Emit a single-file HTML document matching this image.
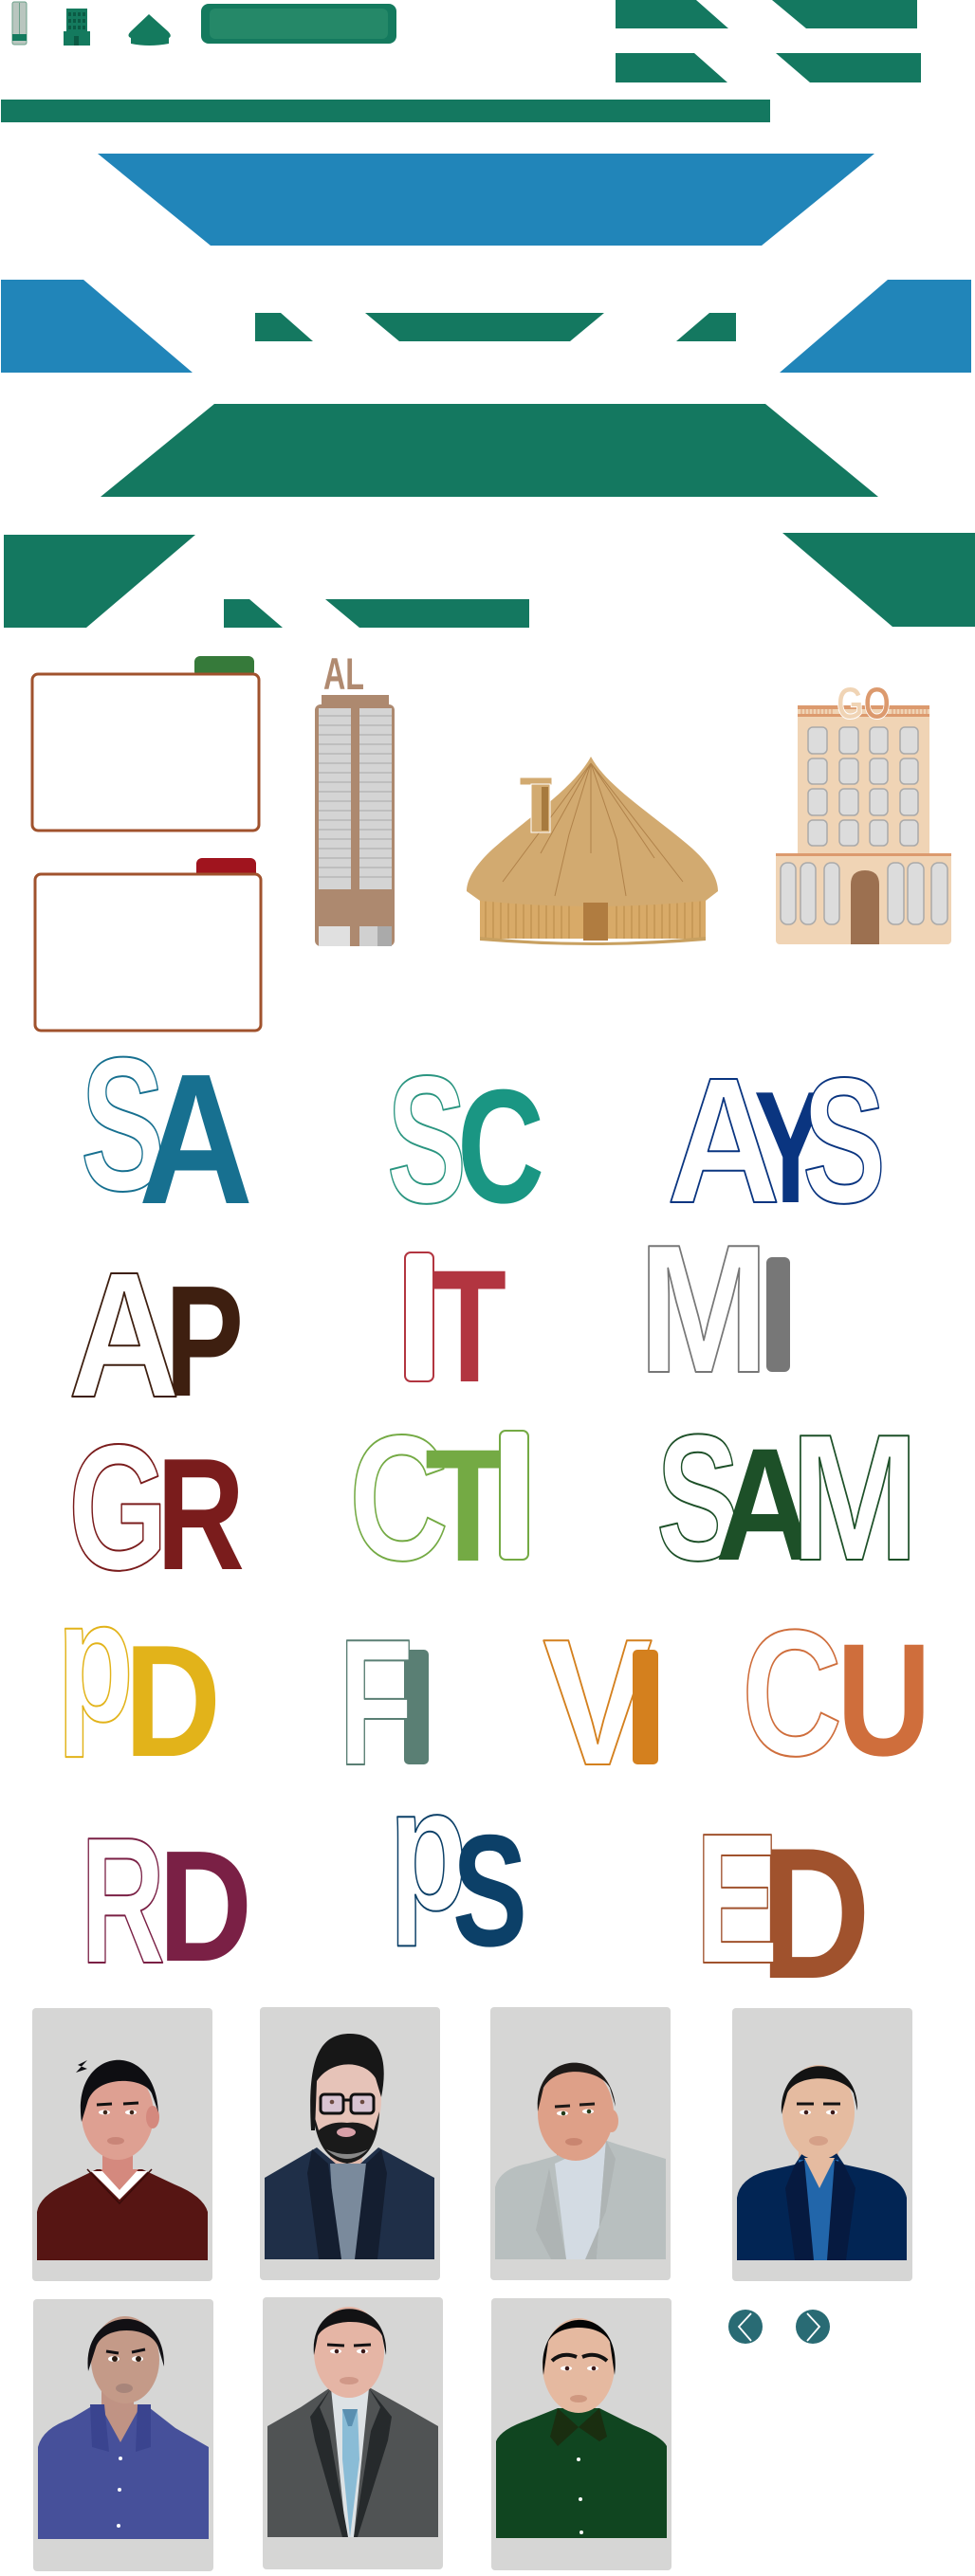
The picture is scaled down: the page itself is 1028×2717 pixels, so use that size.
<!DOCTYPE html>
<html><head><meta charset="utf-8"><style>
html,body{margin:0;padding:0;background:#fff;width:1028px;height:2717px;overflow:hidden}
svg{display:block}
.o{fill:#fff;stroke-width:2;stroke-linejoin:round}
text{font-family:"Liberation Sans Narrow","Liberation Sans",sans-serif;font-weight:bold}
</style></head><body>
<svg width="1028" height="2717" viewBox="0 0 1028 2717" xmlns="http://www.w3.org/2000/svg">
<!-- top icons -->
<rect x="13" y="2" width="15" height="45" rx="2" fill="#b9c6bf" stroke="#6aa08a"/>
<rect x="20" y="3" width="1" height="34" fill="#6aa08a"/>
<rect x="13" y="36" width="15" height="7" fill="#147a5e"/>
<rect x="70" y="9" width="22" height="25" fill="#147a5e"/>
<rect x="67" y="33" width="28" height="15" fill="#147a5e"/>
<g fill="#0b5a44"><rect x="72" y="13" width="3" height="4"/><rect x="77" y="13" width="3" height="4"/><rect x="82" y="13" width="3" height="4"/><rect x="87" y="13" width="3" height="4"/><rect x="72" y="20" width="3" height="4"/><rect x="77" y="20" width="3" height="4"/><rect x="82" y="20" width="3" height="4"/><rect x="87" y="20" width="3" height="4"/><rect x="72" y="27" width="3" height="4"/><rect x="77" y="27" width="3" height="4"/><rect x="82" y="27" width="3" height="4"/><rect x="87" y="27" width="3" height="4"/><rect x="78" y="38" width="5" height="10"/></g>
<path d="M157,15 L177,33 Q182,38 178,40 L178,46 Q157,50 138,46 L138,40 Q133,38 138,33 Z" fill="#147a5e"/>
<rect x="212" y="4" width="206" height="42" rx="8" fill="#147a5e"/>
<rect x="221" y="9" width="188" height="32" rx="6" fill="#258868"/>
<g fill="#147860">
<polygon points="649,0 734,0 768,30 649,30"/>
<polygon points="814,0 967,0 967,30 850,30"/>
<polygon points="649,56 732,56 767,87 649,87"/>
<polygon points="818,56 971,56 971,87 854,87"/>
<rect x="1" y="105" width="811" height="24"/>
<polygon points="269,330 296,330 330,360 269,360"/>
<polygon points="385,330 637,330 601,360 421,360"/>
<polygon points="748,330 776,330 776,360 713,360"/>
<polygon points="226,426 807,426 926,524 106,524"/>
<polygon points="4,564 206,564 91,662 4,662"/>
<polygon points="825,562 1028,562 1028,661 941,661"/>
<polygon points="236,632 263,632 298,662 236,662"/>
<polygon points="343,632 558,632 558,662 379,662"/>
</g>
<g fill="#2185b9">
<polygon points="103,162 922,162 803,259 222,259"/>
<polygon points="1,295 88,295 203,393 1,393"/>
<polygon points="936,295 1024,295 1024,393 822,393"/>
</g>
<!-- boxes -->
<rect x="205" y="692" width="63" height="22" rx="6" fill="#367a3a"/>
<rect x="34" y="711" width="239" height="165" rx="6" fill="#fff" stroke="#a0522d" stroke-width="3"/>
<rect x="207" y="905" width="63" height="22" rx="6" fill="#a0141e"/>
<rect x="37" y="922" width="238" height="165" rx="6" fill="#fff" stroke="#a0522d" stroke-width="3"/>
<!-- tower -->
<text x="341" y="727" font-size="47" textLength="43" lengthAdjust="spacingAndGlyphs" fill="#b08a70">AL</text>
<rect x="339" y="733" width="71" height="12" fill="#ad896f"/>
<rect x="332" y="743" width="84" height="255" rx="6" fill="#ad896f"/>
<rect x="336" y="747" width="34" height="191" fill="#d4d4d4"/>
<rect x="379" y="747" width="34" height="191" fill="#d4d4d4"/>
<g stroke="#a8a8a8" stroke-width="1">
<path d="M336,755H370M336,765H370M336,775H370M336,785H370M336,795H370M336,805H370M336,815H370M336,825H370M336,835H370M336,845H370M336,855H370M336,865H370M336,875H370M336,885H370M336,895H370M336,905H370M336,915H370M336,925H370M379,755H413M379,765H413M379,775H413M379,785H413M379,795H413M379,805H413M379,815H413M379,825H413M379,835H413M379,845H413M379,855H413M379,865H413M379,875H413M379,885H413M379,895H413M379,905H413M379,915H413M379,925H413"/>
</g>
<rect x="336" y="977" width="33" height="21" fill="#e0e0e0"/><rect x="379" y="977" width="34" height="21" fill="#d0d0d0"/><rect x="398" y="977" width="15" height="21" fill="#aaa"/>
<!-- hut -->
<rect x="506" y="945" width="238" height="45" fill="#d8aa68"/>
<g stroke="#b88a48" stroke-width="1"><path d="M512,948V990M520,948V990M528,948V990M536,948V990M544,948V990M552,948V990M560,948V990M568,948V990M576,948V990M584,948V990M592,948V990M600,948V990M650,948V990M658,948V990M666,948V990M674,948V990M682,948V990M690,948V990M698,948V990M706,948V990M714,948V990M722,948V990M730,948V990M738,948V990"/></g>
<path d="M506,988 Q625,1000 744,988 L744,992 Q625,1002 506,992Z" fill="#c8a060"/>
<path d="M623,798 C640,830 690,860 730,895 C752,915 757,930 757,940 L744,950 Q625,962 506,950 L492,940 C492,930 498,915 520,895 C560,860 606,830 623,798Z" fill="#d2aa70"/>
<g stroke="#b0824a" stroke-width="1" fill="none"><path d="M623,805 L600,880 M623,805 L650,885 M623,805 L570,900 M623,805 L690,905 M623,805 L530,930 M623,805 L720,930 M623,805 L623,900 M600,880 L585,945 M650,885 L660,945"/></g>
<rect x="615" y="952" width="26" height="40" fill="#b07c40"/>
<rect x="548" y="820" width="34" height="8" fill="#d2aa70" stroke="#fff"/>
<rect x="560" y="827" width="20" height="51" fill="#d2aa70" stroke="#fff"/>
<rect x="571" y="830" width="7" height="46" fill="#a77a3e"/>
<!-- GO building -->
<rect x="841" y="744" width="139" height="160" fill="#f0d4b5"/>
<rect x="841" y="744" width="139" height="4" fill="#dc9a6e"/><rect x="841" y="753" width="139" height="3" fill="#dc9a6e"/>
<g stroke="#dc9a6e" stroke-width="1"><path d="M845,748V753M849,748V753M853,748V753M857,748V753M861,748V753M865,748V753M869,748V753M873,748V753M877,748V753M941,748V753M945,748V753M949,748V753M953,748V753M957,748V753M961,748V753M965,748V753M969,748V753M973,748V753M977,748V753"/></g>
<text x="882" y="758" font-size="48" textLength="57" lengthAdjust="spacingAndGlyphs" fill="#f0d4b5" stroke="#fff" stroke-width="1">G<tspan fill="#dc9a6e">O</tspan></text>
<g fill="#dcdcdc" stroke="#aaa" stroke-width="1.5">
<rect x="852" y="767" width="20" height="28" rx="5"/><rect x="885" y="767" width="20" height="28" rx="5"/><rect x="917" y="767" width="19" height="28" rx="5"/><rect x="949" y="767" width="19" height="28" rx="5"/>
<rect x="852" y="800" width="20" height="27" rx="5"/><rect x="885" y="800" width="20" height="27" rx="5"/><rect x="917" y="800" width="19" height="27" rx="5"/><rect x="949" y="800" width="19" height="27" rx="5"/>
<rect x="852" y="832" width="20" height="28" rx="5"/><rect x="885" y="832" width="20" height="28" rx="5"/><rect x="917" y="832" width="19" height="28" rx="5"/><rect x="949" y="832" width="19" height="28" rx="5"/>
<rect x="852" y="865" width="20" height="27" rx="5"/><rect x="885" y="865" width="20" height="27" rx="5"/><rect x="917" y="865" width="19" height="27" rx="5"/><rect x="949" y="865" width="19" height="27" rx="5"/>
</g>
<rect x="818" y="900" width="185" height="96" rx="4" fill="#f0d4b5"/>
<rect x="818" y="900" width="185" height="3" fill="#dc9a6e"/>
<g fill="#dcdcdc" stroke="#aaa" stroke-width="1.5">
<rect x="823" y="910" width="16" height="65" rx="7"/><rect x="844" y="910" width="16" height="65" rx="7"/><rect x="869" y="910" width="16" height="65" rx="7"/><rect x="936" y="910" width="17" height="65" rx="7"/><rect x="957" y="910" width="17" height="65" rx="7"/><rect x="982" y="910" width="17" height="65" rx="7"/>
</g>
<path d="M897,996 V933 Q897,918 912,918 Q927,918 927,933 V996Z" fill="#9c7050"/>
<!-- letters -->
<g stroke="#177090" fill="#177090"><text class="o" x="85" y="1255" font-size="201" textLength="89" lengthAdjust="spacingAndGlyphs">S</text><text x="146" y="1269" font-size="196" textLength="121" lengthAdjust="spacingAndGlyphs" stroke="none">A</text></g>
<g stroke="#2a9580" fill="#1a9683"><text class="o" x="408" y="1268" font-size="192" textLength="84" lengthAdjust="spacingAndGlyphs">S</text><text x="482" y="1268" font-size="171" textLength="92" lengthAdjust="spacingAndGlyphs" stroke="none">C</text></g>
<g stroke="#0a3580" fill="#0a3580"><text class="o" x="703" y="1268" font-size="189" textLength="120" lengthAdjust="spacingAndGlyphs">A</text><text x="795" y="1268" font-size="168" textLength="77" lengthAdjust="spacingAndGlyphs" stroke="none">Y</text><text class="o" x="846" y="1268" font-size="189" textLength="88" lengthAdjust="spacingAndGlyphs">S</text></g>
<g stroke="#3e1f10" fill="#3e1f10"><text x="174" y="1472" font-size="167" textLength="83" lengthAdjust="spacingAndGlyphs" stroke="none">P</text><text class="o" x="72" y="1473" font-size="189" textLength="118" lengthAdjust="spacingAndGlyphs">A</text></g>
<g stroke="#b23540" fill="#b23540"><text x="456" y="1457" font-size="169" textLength="78" lengthAdjust="spacingAndGlyphs" stroke="none">T</text><rect class="o" x="427" y="1321" width="30" height="136" rx="6"/></g>
<g stroke="#777" fill="#777"><rect x="808" y="1326" width="25" height="121" rx="6" stroke="none"/><text class="o" x="673" y="1447" font-size="193" textLength="138" lengthAdjust="spacingAndGlyphs">M</text></g>
<g stroke="#7a1c1c" fill="#7a1c1c"><text class="o" x="72" y="1655" font-size="189" textLength="105" lengthAdjust="spacingAndGlyphs">G</text><text x="165" y="1655" font-size="168" textLength="93" lengthAdjust="spacingAndGlyphs" stroke="none">R</text></g>
<g stroke="#74aa44" fill="#74aa44"><text class="o" x="368" y="1645" font-size="189" textLength="105" lengthAdjust="spacingAndGlyphs">C</text><text x="448" y="1646" font-size="169" textLength="91" lengthAdjust="spacingAndGlyphs" stroke="none">T</text><rect class="o" x="527" y="1509" width="30" height="136" rx="6"/></g>
<g stroke="#1d5028" fill="#1d5028"><text class="o" x="692" y="1645" font-size="190" textLength="88" lengthAdjust="spacingAndGlyphs">S</text><text x="754" y="1645" font-size="169" textLength="105" lengthAdjust="spacingAndGlyphs" stroke="none">A</text><text class="o" x="833" y="1645" font-size="190" textLength="136" lengthAdjust="spacingAndGlyphs">M</text></g>
<g stroke="#e2b31a" fill="#e2b31a"><text class="o" x="60" y="1815" font-size="184" textLength="81" lengthAdjust="spacingAndGlyphs">p</text><text x="131" y="1852" font-size="168" textLength="102" lengthAdjust="spacingAndGlyphs" stroke="none">D</text></g>
<g stroke="#5a7f74" fill="#5a7f74"><rect x="426" y="1740" width="26" height="121" rx="5" stroke="none"/><text class="o" x="357" y="1861" font-size="190" textLength="79" lengthAdjust="spacingAndGlyphs">F</text></g>
<g stroke="#d4801e" fill="#d4801e"><text class="o" x="572" y="1861" font-size="190" textLength="116" lengthAdjust="spacingAndGlyphs">V</text><rect x="667" y="1740" width="27" height="121" rx="5" stroke="none"/></g>
<g stroke="#cf6e3c" fill="#cf6e3c"><text class="o" x="782" y="1851" font-size="190" textLength="106" lengthAdjust="spacingAndGlyphs">C</text><text x="882" y="1851" font-size="169" textLength="100" lengthAdjust="spacingAndGlyphs" stroke="none">U</text></g>
<g stroke="#7a2045" fill="#7a2045"><text class="o" x="85" y="2070" font-size="190" textLength="89" lengthAdjust="spacingAndGlyphs">R</text><text x="167" y="2068" font-size="167" textLength="99" lengthAdjust="spacingAndGlyphs" stroke="none">D</text></g>
<g stroke="#0c4068" fill="#0c4068"><text class="o" x="410" y="2014" font-size="185" textLength="83" lengthAdjust="spacingAndGlyphs">p</text><text x="477" y="2052" font-size="168" textLength="79" lengthAdjust="spacingAndGlyphs" stroke="none">S</text></g>
<g stroke="#a0522d" fill="#a0522d"><text x="801" y="2086" font-size="197" textLength="117" lengthAdjust="spacingAndGlyphs" stroke="none">D</text><text class="o" x="733" y="2070" font-size="196" textLength="88" lengthAdjust="spacingAndGlyphs">E</text></g>
<!-- cards -->
<g fill="#d6d6d5">
<rect x="34" y="2118" width="190" height="288" rx="4"/><rect x="274" y="2117" width="190" height="288" rx="4"/><rect x="517" y="2117" width="190" height="288" rx="4"/><rect x="772" y="2118" width="190" height="288" rx="4"/>
<rect x="35" y="2425" width="190" height="287" rx="4"/><rect x="277" y="2423" width="190" height="287" rx="4"/><rect x="518" y="2424" width="190" height="287" rx="4"/>
</g>
<!-- avatar 1 -->
<g transform="translate(34,2118)">
<rect x="74" y="140" width="32" height="45" fill="#d4897e"/>
<path d="M5,266 L5,215 Q8,198 35,186 L68,170 L116,170 L150,186 Q180,198 185,215 L185,266 Z" fill="#561513"/>
<polygon points="62,172 92,202 122,172" fill="#fff"/><polygon points="72,170 92,192 112,170" fill="#d4897e"/>
<path d="M58,170 L92,206 L126,170" fill="none" stroke="#3a0c0a" stroke-width="1.5"/>
<ellipse cx="90" cy="112" rx="38" ry="48" fill="#dea092"/><ellipse cx="127" cy="115" rx="7" ry="12" fill="#d4897e"/>
<path d="M52,120 C40,40 130,30 133,110 L126,90 C118,72 66,70 58,100 Z" fill="#0e0e12"/>
<path d="M48,60 L58,55 L46,68 L58,64Z" fill="#0e0e12"/>
<ellipse cx="76" cy="110" rx="6" ry="2.5" fill="#fff"/><ellipse cx="104" cy="110" rx="6" ry="2.5" fill="#fff"/>
<circle cx="77" cy="110" r="2.3" fill="#3a2418"/><circle cx="105" cy="110" r="2.3" fill="#3a2418"/>
<path d="M68,102 L84,101 M96,101 L112,100" stroke="#111" stroke-width="3"/>
<ellipse cx="88" cy="140" rx="9" ry="4" fill="#c98578"/>
</g>
<!-- avatar 2 -->
<g transform="translate(274,2117)">
<rect x="74" y="140" width="34" height="50" fill="#e0b8aa"/>
<path d="M5,266 L5,180 L60,148 L80,165 L106,165 L125,148 L184,180 L184,266 Z" fill="#1f2f48"/>
<polygon points="74,165 112,165 106,266 80,266" fill="#7a8a9c"/>
<polygon points="55,150 72,165 86,266 62,266 50,175" fill="#141e30"/><polygon points="128,150 112,165 100,266 124,266 134,175" fill="#141e30"/>
<ellipse cx="91" cy="98" rx="37" ry="52" fill="#e6c3b8"/>
<path d="M54,130 C50,60 60,28 95,28 C130,28 135,60 128,95 L122,75 C110,55 75,55 60,78 L58,130 Z" fill="#171717"/>
<path d="M56,110 Q60,160 92,165 Q124,160 126,110 L120,130 Q110,120 92,122 Q74,120 62,130 Z" fill="#1a1a1a"/>
<path d="M70,150 Q92,170 114,150 Q92,160 70,150Z" fill="#888"/>
<ellipse cx="91" cy="132" rx="10" ry="5" fill="#d8a0a8"/>
<rect x="64" y="92" width="24" height="20" rx="4" fill="#d8c4d2" stroke="#111" stroke-width="3"/><rect x="96" y="92" width="24" height="20" rx="4" fill="#d8c4d2" stroke="#111" stroke-width="3"/><path d="M88,98 H96" stroke="#111" stroke-width="3"/>
<circle cx="76" cy="100" r="2.3" fill="#6a4a40"/><circle cx="108" cy="100" r="2.3" fill="#6a4a40"/>
</g>
<!-- avatar 3 -->
<g transform="translate(517,2117)">
<rect x="70" y="140" width="34" height="48" fill="#d8947c"/>
<path d="M5,266 L5,190 Q10,170 40,165 L65,158 L120,140 L135,145 L185,160 L185,266 Z" fill="#b8bfbf"/>
<polygon points="68,165 122,140 112,266 80,266" fill="#d3dbe3"/>
<polygon points="62,170 48,235 64,266 80,266" fill="#aeb4b4"/><polygon points="122,140 132,160 122,215 100,266 112,266" fill="#aeb4b4"/>
<ellipse cx="90" cy="112" rx="40" ry="50" fill="#dea088"/><ellipse cx="128" cy="120" rx="7" ry="12" fill="#dea088"/>
<path d="M50,110 C45,45 125,40 132,105 L126,85 C115,65 70,60 56,85 Z" fill="#1e1a18"/>
<ellipse cx="76" cy="112" rx="6" ry="2.5" fill="#fff"/><ellipse cx="103" cy="110" rx="6" ry="2.5" fill="#fff"/>
<circle cx="77" cy="112" r="2.3" fill="#223a18"/><circle cx="104" cy="110" r="2.3" fill="#223a18"/>
<path d="M68,105 L84,104 M94,103 L110,102" stroke="#1e1a18" stroke-width="3"/>
<ellipse cx="88" cy="142" rx="9" ry="4" fill="#c98570"/>
</g>
<!-- avatar 4 -->
<g transform="translate(772,2118)">
<rect x="70" y="140" width="42" height="50" fill="#e5bba0"/>
<path d="M5,266 L5,200 Q8,180 35,172 L66,165 L76,150 L108,150 L118,165 L150,172 Q180,180 184,200 L184,266 Z" fill="#022554"/>
<polygon points="70,160 112,160 106,266 80,266" fill="#2266aa"/><polygon points="76,158 108,158 92,190" fill="#e5bba0"/>
<polygon points="66,165 76,160 86,266 66,266 56,190" fill="#061a40"/><polygon points="118,165 108,160 100,266 120,266 130,190" fill="#061a40"/>
<ellipse cx="91" cy="110" rx="38" ry="50" fill="#e5bba0"/>
<path d="M52,112 C48,45 134,45 132,108 L128,90 C118,70 68,68 58,90 Z" fill="#131313"/>
<ellipse cx="77" cy="110" rx="6" ry="2.5" fill="#fff"/><ellipse cx="105" cy="110" rx="6" ry="2.5" fill="#fff"/>
<circle cx="78" cy="110" r="2.3" fill="#3a1818"/><circle cx="106" cy="110" r="2.3" fill="#3a1818"/>
<path d="M68,101 L86,101 M96,101 L114,101" stroke="#131313" stroke-width="3"/>
<ellipse cx="91" cy="140" rx="10" ry="5" fill="#d5a088"/>
</g>
<!-- avatar 5 -->
<g transform="translate(35,2381)">
<rect x="72" y="130" width="34" height="50" fill="#c09384"/>
<path d="M5,297 L5,200 Q10,180 40,170 L65,155 L118,155 L150,180 L185,200 L185,297 Z" fill="#46509a"/>
<polygon points="70,155 92,195 114,155" fill="#c09384"/>
<polygon points="60,155 75,155 80,205 62,200" fill="#3a448f"/><polygon points="124,155 110,155 108,205 124,200" fill="#3a448f"/>
<circle cx="92" cy="212" r="2" fill="#fff"/><circle cx="91" cy="245" r="2" fill="#fff"/><circle cx="90" cy="283" r="2" fill="#fff"/>
<ellipse cx="97" cy="108" rx="36" ry="46" fill="#c49a88"/>
<path d="M58,120 C50,50 140,45 138,115 L132,95 C125,72 74,70 66,95 Z" fill="#121014"/>
<ellipse cx="85" cy="107" rx="6" ry="3" fill="#fff"/><ellipse cx="110" cy="107" rx="6" ry="3" fill="#fff"/>
<circle cx="86" cy="107" r="3" fill="#2a1a10"/><circle cx="111" cy="107" r="3" fill="#2a1a10"/>
<path d="M77,99 L90,101 M104,100 L118,97" stroke="#121014" stroke-width="3"/>
<ellipse cx="96" cy="138" rx="9" ry="5" fill="#a8857a"/>
</g>
<!-- avatar 6 -->
<g transform="translate(277,2379)">
<rect x="72" y="130" width="38" height="50" fill="#e0ad9e"/>
<path d="M5,297 L5,180 L40,160 L70,140 L114,140 L150,160 L185,180 L185,297 Z" fill="#505354"/>
<polygon points="72,140 112,140 96,297 88,297" fill="#dde2e5"/>
<polygon points="84,162 100,162 102,215 92,297 84,215" fill="#8abcd6"/><polygon points="84,162 100,162 94,180 90,180" fill="#5a8fb0"/>
<polygon points="72,140 60,160 70,185 90,297 84,297 55,195 50,170" fill="#262a2c"/><polygon points="112,140 124,160 114,185 96,297 100,297 132,195 136,170" fill="#262a2c"/>
<ellipse cx="91" cy="102" rx="37" ry="48" fill="#e5b5a5"/>
<path d="M54,105 C48,40 134,40 130,105 L126,85 C118,65 68,65 58,85 Z" fill="#121214"/>
<ellipse cx="77" cy="101" rx="6" ry="2.5" fill="#fff"/><ellipse cx="105" cy="101" rx="6" ry="2.5" fill="#fff"/>
<circle cx="78" cy="101" r="2.3" fill="#3a1818"/><circle cx="106" cy="101" r="2.3" fill="#3a1818"/>
<path d="M68,94 L86,95 M96,95 L114,94" stroke="#121214" stroke-width="3"/>
<ellipse cx="91" cy="132" rx="10" ry="4" fill="#d09888"/>
</g>
<!-- avatar 7 -->
<g transform="translate(518,2380)">
<rect x="74" y="140" width="36" height="45" fill="#e0b196"/>
<path d="M5,297 L5,195 Q10,182 40,172 L70,160 L114,160 L150,178 Q180,190 185,200 L185,297 Z" fill="#104520"/>
<polygon points="70,160 92,180 114,160 122,190 114,195 92,180 70,200 62,190" fill="#1a2e10"/>
<circle cx="92" cy="214" r="2" fill="#fff"/><circle cx="94" cy="256" r="2" fill="#fff"/><circle cx="95" cy="291" r="2" fill="#fff"/>
<ellipse cx="92" cy="115" rx="38" ry="50" fill="#e5b9a0"/>
<path d="M55,125 C45,50 140,45 130,125 L125,90 C115,70 70,70 60,90 Z" fill="#050505"/>
<path d="M64,110 Q75,100 90,106 M96,106 Q110,100 122,110" stroke="#111" stroke-width="4" fill="none"/>
<ellipse cx="79" cy="118" rx="6" ry="2.5" fill="#fff"/><ellipse cx="107" cy="118" rx="6" ry="2.5" fill="#fff"/>
<circle cx="80" cy="118" r="2.3" fill="#3a1818"/><circle cx="108" cy="118" r="2.3" fill="#3a1818"/>
<ellipse cx="92" cy="150" rx="9" ry="4" fill="#cf9880"/>
</g>
<!-- arrows -->
<circle cx="786" cy="2454" r="18" fill="#296b74"/><circle cx="857" cy="2454" r="18" fill="#296b74"/>
<path d="M792,2440 L779,2454 L792,2469" stroke="#fff" stroke-width="1.8" fill="none"/>
<path d="M851,2440 L864,2454 L851,2469" stroke="#fff" stroke-width="1.8" fill="none"/>
</svg>
</body></html>
